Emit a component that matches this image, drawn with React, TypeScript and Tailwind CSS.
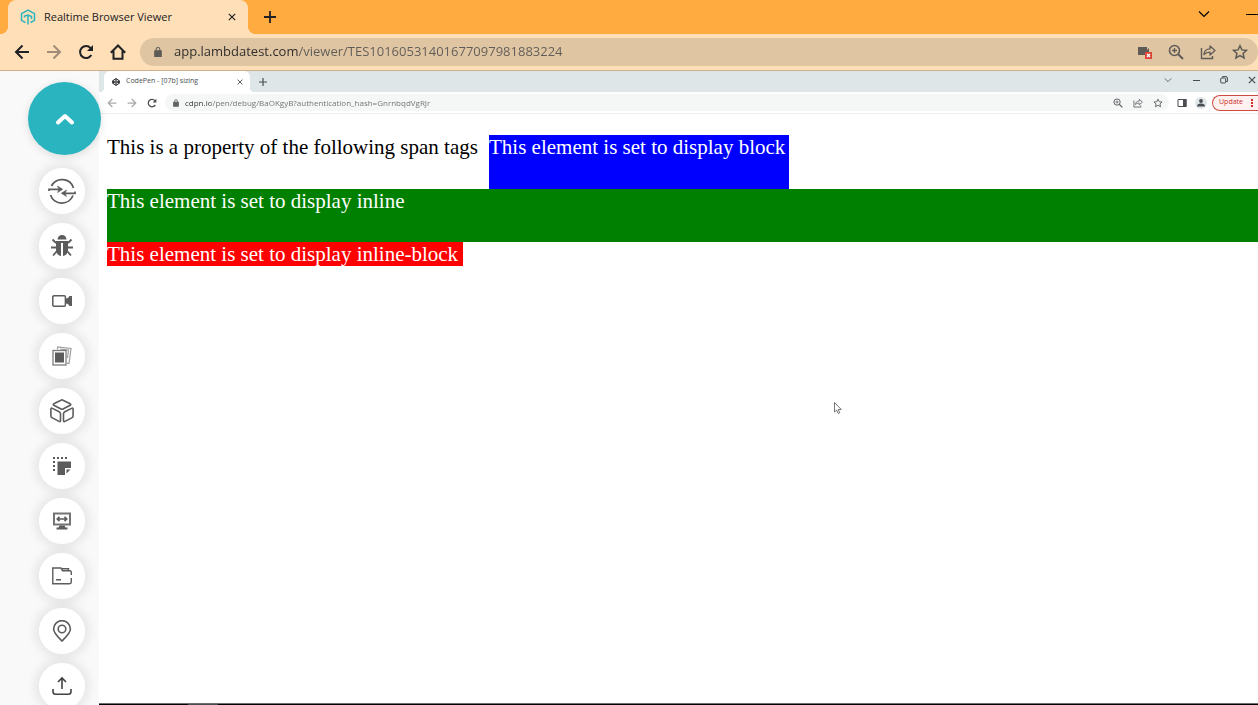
import type { ReactNode } from "react";

function Icon({ className, box = "0 0 24 24", children }: { className: string; box?: string; children: ReactNode }) {
  return (
    <svg className={`shrink-0 ${className}`} viewBox={box} fill="none" stroke="currentColor" aria-hidden="true">
      {children}
    </svg>
  );
}

const Close = ({ className }: { className: string }) => (
  <Icon className={className} box="0 0 10 10"><path d="M1 1l8 8M9 1L1 9" strokeWidth="1.5" /></Icon>
);
const Plus = ({ className }: { className: string }) => (
  <Icon className={className} box="0 0 12 12"><path d="M6 0v12M0 6h12" strokeWidth="1.8" /></Icon>
);
const Chevron = ({ className }: { className: string }) => (
  <Icon className={className} box="0 0 12 12"><path d="M1 3.5l5 5 5-5" strokeWidth="1.2" /></Icon>
);
const Arrow = ({ className }: { className: string }) => (
  <Icon className={className} box="0 0 16 16"><path d="M15 8H2M8.5 1.5L2 8l6.5 6.5" strokeWidth="2" /></Icon>
);
const Reload = ({ className }: { className: string }) => (
  <Icon className={className} box="0 0 16 16">
    <path d="M13.3 11A6 6 0 1 1 12.6 4.1" strokeWidth="2" />
    <path d="M15 1v6H9z" fill="currentColor" stroke="none" />
  </Icon>
);
const Lock = ({ className }: { className: string }) => (
  <Icon className={className} box="0 0 10 13">
    <path d="M1 5h8v7H1z" fill="currentColor" strokeWidth="1.5" strokeLinejoin="round" />
    <path d="M2.7 5V3.2a2.3 2.3 0 0 1 4.6 0V5" strokeWidth="1.3" />
  </Icon>
);
const ZoomIn = ({ className }: { className: string }) => (
  <Icon className={className} box="0 0 16 16">
    <circle cx="6.5" cy="6.5" r="5" strokeWidth="1.6" />
    <path d="M10 10l5 5" strokeWidth="2" />
    <path d="M6.5 4v5M4 6.5h5" strokeWidth="1.3" />
  </Icon>
);
const Share = ({ className }: { className: string }) => (
  <Icon className={className} box="0 0 16 16">
    <path d="M1.5 4v10.5h11V12" strokeWidth="1.4" />
    <path d="M4 10.5c.3-4 2.5-5.5 6-5.6V2l5 4.5-5 4.500V8.200c-2.500 0-4.500.6-6 2.300z" strokeWidth="1.3" strokeLinejoin="round" />
  </Icon>
);
const Star = ({ className }: { className: string }) => (
  <Icon className={className} box="0 0 16 16">
    <path d="M8 1.700l1.900 4.200 4.600.5-3.400 3.100 1 4.500L8 11.700 3.900 14l1-4.500L1.500 6.400l4.600-.5z" strokeWidth="1.5" />
  </Icon>
);

const TOOLS: { label: string; icon: ReactNode }[] = [
  {
    label: "Switch",
    icon: (
      <Icon className="size-7" box="0 0 28 28">
        <path d="M3.500 9A12 12 0 0 1 25.500 11M25 18.500A12 12 0 0 1 2.500 18" strokeWidth="1.800" />
        <path d="M1 14v-1.700h10M27 14.500v1.800H17" strokeWidth="1.700" />
        <path d="M9.500 9l5.200 3.300-5.200 3.300 1.500-3.300zM18.500 13l-5.200 3.300 5.200 3.300-1.500-3.300z" fill="currentColor" strokeWidth=".6" />
      </Icon>
    ),
  },
  {
    label: "Mark as bug",
    icon: (
      <Icon className="size-6">
        <path d="M7.500 5.500a4.500 4.500 0 0 1 9 0zM6 7h12v9c0 3-2 5.500-5 6V9h-2v13c-3-.5-5-3-5-6z" fill="currentColor" stroke="none" />
        <path d="M6 9L2.500 5.500M18 9l3.500-3.500M6.500 13.500H1M17.500 13.500H23M7 17l-4 4.500M17 17l4 4.500" strokeWidth="1.800" />
      </Icon>
    ),
  },
  {
    label: "Record session",
    icon: (
      <Icon className="h-3 w-5" box="0 0 20 12">
        <rect x=".8" y=".8" width="12.600" height="10.400" rx="1.200" strokeWidth="1.500" />
        <path d="M14 3.500l2-.5 1.500-2H20v10h-2.500L16 9l-2-.5z" fill="currentColor" stroke="none" />
      </Icon>
    ),
  },
  {
    label: "Gallery",
    icon: (
      <Icon className="size-5" box="0 0 20 20">
        <rect x="1" y="4.500" width="13" height="14.500" strokeWidth="1.300" opacity=".8" />
        <rect x="3.500" y="7" width="8" height="9" fill="currentColor" />
        <path d="M5.500 3.500l.2-2.500L19 2.500 17 17.500l-2-.3M8 3l8.500 1-1 8" strokeWidth="1.200" opacity=".6" />
      </Icon>
    ),
  },
  {
    label: "Project",
    icon: (
      <Icon className="size-6">
        <g strokeWidth="1.600" strokeLinejoin="round">
          <path d="M12 .9q.6 0 1 .3l7.200 3.600q1.200.8 0 1.500L13 10q-1 .5-2 0L3.800 6.300q-1.200-.7 0-1.500L11 1.200q.4-.3 1-.3z" />
          <path d="M.9 10.300q0-1.700 1.500-.9l6.800 3.400q1.300.7 1.300 2v6.700q0 1.600-1.500.9l-6.700-3.500Q.9 18.200.9 17z" />
          <path d="M23.100 10.300q0-1.700-1.500-.9l-6.800 3.400q-1.300.7-1.300 2v6.700q0 1.600 1.500.9l6.700-3.500q1.400-.7 1.400-1.900z" />
        </g>
      </Icon>
    ),
  },
  {
    label: "Screenshot",
    icon: (
      <Icon className="size-[18px]" box="0 0 18 18">
        <path d="M0 1h15M1 4v12" strokeWidth="2" strokeDasharray="2 2" />
        <path d="M4.500 4.500H18V11h-6v7H4.500z" fill="currentColor" stroke="none" />
        <path d="M13.500 12.500h4l-4 4z" fill="currentColor" stroke="none" />
      </Icon>
    ),
  },
  {
    label: "Resolution",
    icon: (
      <Icon className="size-[18px]" box="0 0 18 18">
        <rect x="1" y="1.500" width="16" height="11" strokeWidth="2" opacity=".85" />
        <path d="M4.500 7h9M6.500 4.800L4.300 7l2.200 2.200M11.500 4.800L13.700 7l-2.200 2.200" strokeWidth="1.700" />
        <path d="M6.500 13.500h5l1 2h2v2h-11v-2h2z" fill="currentColor" stroke="none" />
      </Icon>
    ),
  },
  {
    label: "Files",
    icon: (
      <Icon className="size-5" box="0 0 20 20">
        <path d="M19.300 12v4q0 1.700-1.700 1.700H.8V2H9l1.500 2.800h7.300q1.500 0 1.500 1.500V9M10 2.800h6.500v2M4 13.800h5" strokeWidth="1.400" />
      </Icon>
    ),
  },
  {
    label: "Geolocation",
    icon: (
      <Icon className="h-[22px] w-5" box="0 0 20 22">
        <path d="M10 21C5.500 16.500 1.600 13 1.600 9a8.400 8.400 0 0 1 16.800 0C18.400 13 14.500 16.500 10 21z" strokeWidth="1.600" />
        <circle cx="10" cy="9" r="3.800" strokeWidth="1.600" />
      </Icon>
    ),
  },
  {
    label: "Upload",
    icon: (
      <Icon className="size-5 text-[#424242]" box="0 0 20 20">
        <path d="M10 13V2M6 6l4-4 4 4M1 13v2.500q0 2.700 2.700 2.700h12.600q2.700 0 2.700-2.700V13" strokeWidth="1.600" />
      </Icon>
    ),
  },
];

function OuterChrome() {
  return (
    <header className="shrink-0 border-b border-[#cfae8c] bg-[#ffdfb8] text-[#202124]">
      <div className="flex h-[34px] items-stretch bg-[#ffab40]">
        <div className="relative ml-2 flex w-60 items-center rounded-t-lg bg-[#ffdfb8] px-3">
          <Icon className="size-4 text-[#2ab5c0]" box="0 0 16 16">
            <path d="M5.500 13.600L1.500 11.300V4.700L8 1l6.500 3.700v6.600L10.500 13.500" strokeWidth="1.500" />
            <path d="M4.500 8.500V7L8 6l3.500 1.500V10M8 6.500v9" strokeWidth="1.500" />
          </Icon>
          <span className="ml-2 flex-1 whitespace-nowrap text-[11px]">Realtime Browser Viewer</span>
          <button aria-label="Close tab"><Close className="size-2" /></button>
          <span className="absolute bottom-0 left-full size-2 bg-[radial-gradient(circle_at_100%_0,transparent_8px,#ffdfb8_8px)]" />
          <span className="absolute bottom-0 right-full size-2 bg-[radial-gradient(circle_at_0_0,transparent_8px,#ffdfb8_8px)]" />
        </div>
        <button aria-label="New tab" className="ml-4"><Plus className="size-3" /></button>
        <div className="ml-auto flex items-center gap-9 overflow-hidden pb-1.5 text-black">
          <button aria-label="Search tabs"><Chevron className="size-3" /></button>
          <button aria-label="Minimize">
            <Icon className="size-3" box="0 0 12 12"><path d="M0 6.500h12" /></Icon>
          </button>
        </div>
      </div>
      <div className="flex h-9 items-center pl-3.5">
        <div className="flex gap-4">
          <button aria-label="Back"><Arrow className="size-4" /></button>
          <button aria-label="Forward" className="text-[#a08c78]"><Arrow className="size-4 rotate-180" /></button>
          <button aria-label="Reload"><Reload className="size-4" /></button>
          <button aria-label="Home">
            <Icon className="size-4" box="0 0 16 16">
              <path d="M.8 8.800L8 1.500l7.200 7.300M3.500 7v7.800h9V7" strokeWidth="2" />
            </Icon>
          </button>
        </div>
        <div className="ml-3.5 flex h-7 flex-1 items-center rounded-full bg-[#e0c5a2] pl-3.5 pr-2.5 text-[#5f5c58]">
          <Lock className="h-3 w-2" />
          <input
            aria-label="Address"
            readOnly
            value="app.lambdatest.com/viewer/TES10160531401677097981883224"
            className="ml-3 min-w-0 flex-1 bg-[linear-gradient(90deg,#2b2a29_125px,#5f5c58_125px)] bg-clip-text text-[13px] text-[#5f5c58] outline-none [-webkit-text-fill-color:transparent]"
          />
          <div className="flex gap-4">
            <button aria-label="Camera blocked">
              <Icon className="size-4" box="0 0 16 16">
                <path d="M2 3h9v3l2-2v7H2z" fill="currentColor" stroke="none" />
                <rect x="9" y="8" width="7" height="7" fill="#dd4438" stroke="none" />
                <path d="M11 10l3 3M14 10l-3 3" stroke="#fff" strokeWidth="1.300" />
              </Icon>
            </button>
            <button aria-label="Zoom"><ZoomIn className="size-4" /></button>
            <button aria-label="Share"><Share className="size-4" /></button>
            <button aria-label="Bookmark"><Star className="size-4" /></button>
          </div>
        </div>
      </div>
    </header>
  );
}

function InnerChrome() {
  return (
    <div className="shrink-0 border-b border-[#eeeeee] text-[#4a4d51]">
      <div className="flex h-[21px] bg-[#dee6e8]">
        <div className="relative ml-[5px] flex w-[146px] items-center rounded-t-md bg-white pl-2 pr-[7px]">
          <Icon className="size-2 text-[#202124]" box="0 0 8 8">
            <path d="M4 .6l3.300 2.200v2.400L4 7.400.7 5.200V2.800zM.7 2.800L4 5.200l3.300-2.400M.7 5.200L4 2.800l3.300 2.400M4 .6v2.200M4 5.200v2.200" strokeWidth="1" />
          </Icon>
          <span className="ml-1.5 flex-1 whitespace-nowrap text-[7px]">CodePen - [07b] sizing</span>
          <button aria-label="Close CodePen tab" className="flex"><Close className="size-1.5" /></button>
          <span className="absolute bottom-0 left-full size-1 bg-[radial-gradient(circle_at_100%_0,transparent_4px,#fff_4px)]" />
          <span className="absolute bottom-0 right-full size-1 bg-[radial-gradient(circle_at_0_0,transparent_4px,#fff_4px)]" />
        </div>
        <button aria-label="New CodePen tab" className="ml-[9px]"><Plus className="size-2" /></button>
        <div className="ml-auto flex items-center gap-5 pb-1 pr-0.5">
          <button aria-label="List tabs"><Chevron className="size-2" /></button>
          <button aria-label="Minimize window"><Icon className="size-2" box="0 0 8 8"><path d="M1 4.500h7" /></Icon></button>
          <button aria-label="Restore window">
            <Icon className="size-2" box="0 0 8 8"><rect x=".7" y="2" width="5" height="5" rx="1" /><path d="M2.500 1.500V.6h3.500q1.400 0 1.400 1.400v3.500H6" /></Icon>
          </button>
          <button aria-label="Close window"><Close className="size-2" /></button>
        </div>
      </div>
      <div className="flex h-[21px] items-center pl-2">
        <div className="flex gap-2.5">
          <button aria-label="Page back" className="text-[#a8aaad]"><Arrow className="size-2.5" /></button>
          <button aria-label="Page forward" className="text-[#a8aaad]"><Arrow className="size-2.5 rotate-180" /></button>
          <button aria-label="Page reload"><Reload className="size-2.5" /></button>
        </div>
        <div className="ml-2 flex h-[17px] flex-1 items-center rounded-full bg-[#f5f6f6] pl-2 pr-1.5 text-[#5f6367]">
          <Lock className="h-2 w-1.5" />
          <input
            aria-label="Page address"
            readOnly
            value="cdpn.io/pen/debug/BaOKgyB?authentication_hash=GnrnbqdVgRJr"
            className="ml-1.5 min-w-0 flex-1 bg-[linear-gradient(90deg,#303236_26px,#6c6f73_26px)] bg-clip-text text-[8px] text-[#6c6f73] outline-none [-webkit-text-fill-color:transparent]"
          />
          <div className="flex gap-2.5">
            <button aria-label="Page zoom"><ZoomIn className="size-2.5" /></button>
            <button aria-label="Share page"><Share className="size-2.5" /></button>
            <button aria-label="Bookmark page"><Star className="size-2.5" /></button>
          </div>
        </div>
        <button aria-label="Side panel" className="ml-2">
          <Icon className="size-2.5" box="0 0 10 10"><path d="M1 1.500h8v7H1z" /><path d="M6 1h3.500v8H6z" fill="currentColor" stroke="none" /></Icon>
        </button>
        <button aria-label="Profile" className="ml-2 flex size-3 items-center justify-center rounded-full bg-[#dee6e8]">
          <Icon className="size-2" box="0 0 8 8"><g fill="currentColor" stroke="none"><circle cx="4" cy="2" r="1.900" /><path d="M0 7.500Q0 4.500 4 4.500t4 3z" /></g></Icon>
        </button>
        <button className="ml-[5px] flex h-4 w-[46px] items-center gap-2 rounded-l-full border border-r-0 border-[#cf4a42] bg-[#fef1f0] pl-1.5 text-[7px] text-[#c9302c]">
          Update
          <Icon className="h-2 w-0.5" box="0 0 2 8"><path d="M1 0v8" strokeWidth="2" strokeDasharray="2 1" /></Icon>
        </button>
      </div>
    </div>
  );
}

function Sidebar() {
  return (
    <aside className="relative z-10 w-[99px] shrink-0 bg-[#f9f9f9] pl-7 pt-[11px]">
      <button
        aria-label="Collapse tools"
        className="flex size-[73px] items-center justify-center rounded-full bg-[#2ab4c0] text-white shadow-[0_2px_8px_#0000001f]"
      >
        <Icon className="h-3 w-5" box="0 0 20 12">
          <path d="M3 9.500l7-6.500 7 6.500" strokeWidth="4" strokeLinecap="round" strokeLinejoin="round" />
        </Icon>
      </button>
      <ul className="mt-[13px] flex flex-col gap-[9px] pl-[11px]">
        {TOOLS.map(({ label, icon }) => (
          <li key={label} className="size-[46px] rounded-full shadow-[0_0_10px_5px_#00000012]">
            <button
              aria-label={label}
              className="flex size-full items-center justify-center rounded-full bg-white text-[#5c5c5c]"
            >
              {icon}
            </button>
          </li>
        ))}
      </ul>
    </aside>
  );
}

export default function App() {
  return (
    <div className="flex h-screen flex-col overflow-hidden bg-white font-['Open_Sans','Noto_Sans',sans-serif]">
      <OuterChrome />
      <div className="flex min-h-0 flex-1">
        <Sidebar />
        <main className="relative flex min-w-0 flex-1 flex-col">
          <InnerChrome />
          <div className="flex-1 whitespace-nowrap pl-2 pt-[21px] font-['Liberation_Serif',serif] text-[21px] leading-6 text-black">
            <div className="flex">
              <p className="w-[382px] shrink-0">This is a property of the following span tags</p>
              <div className="h-[54px] w-[300px] bg-[#0000ff] text-white">This element is set to display block</div>
            </div>
            <div className="h-[53px] bg-[#008000] text-white">This element is set to display inline</div>
            <span className="inline-block w-[356px] bg-[#ff0000] text-white">This element is set to display inline-block</span>
          </div>
          <div className="flex h-0.5 shrink-0 border-t border-[#6e6e6e] bg-black pl-[89px]">
            <div className="w-[30px] bg-[#4a4a4a]" />
          </div>
          {/* mouse pointer over the remote page */}
          <svg className="absolute left-[735px] top-[331px] h-3 w-2" viewBox="0 0 8 12" aria-hidden="true">
            <path d="M.5.500v9.500l2.200-2 1.500 3.500 1.500-.700L4.300 7.500h3z" fill="#fff" stroke="#555" strokeWidth=".8" />
          </svg>
        </main>
      </div>
    </div>
  );
}
